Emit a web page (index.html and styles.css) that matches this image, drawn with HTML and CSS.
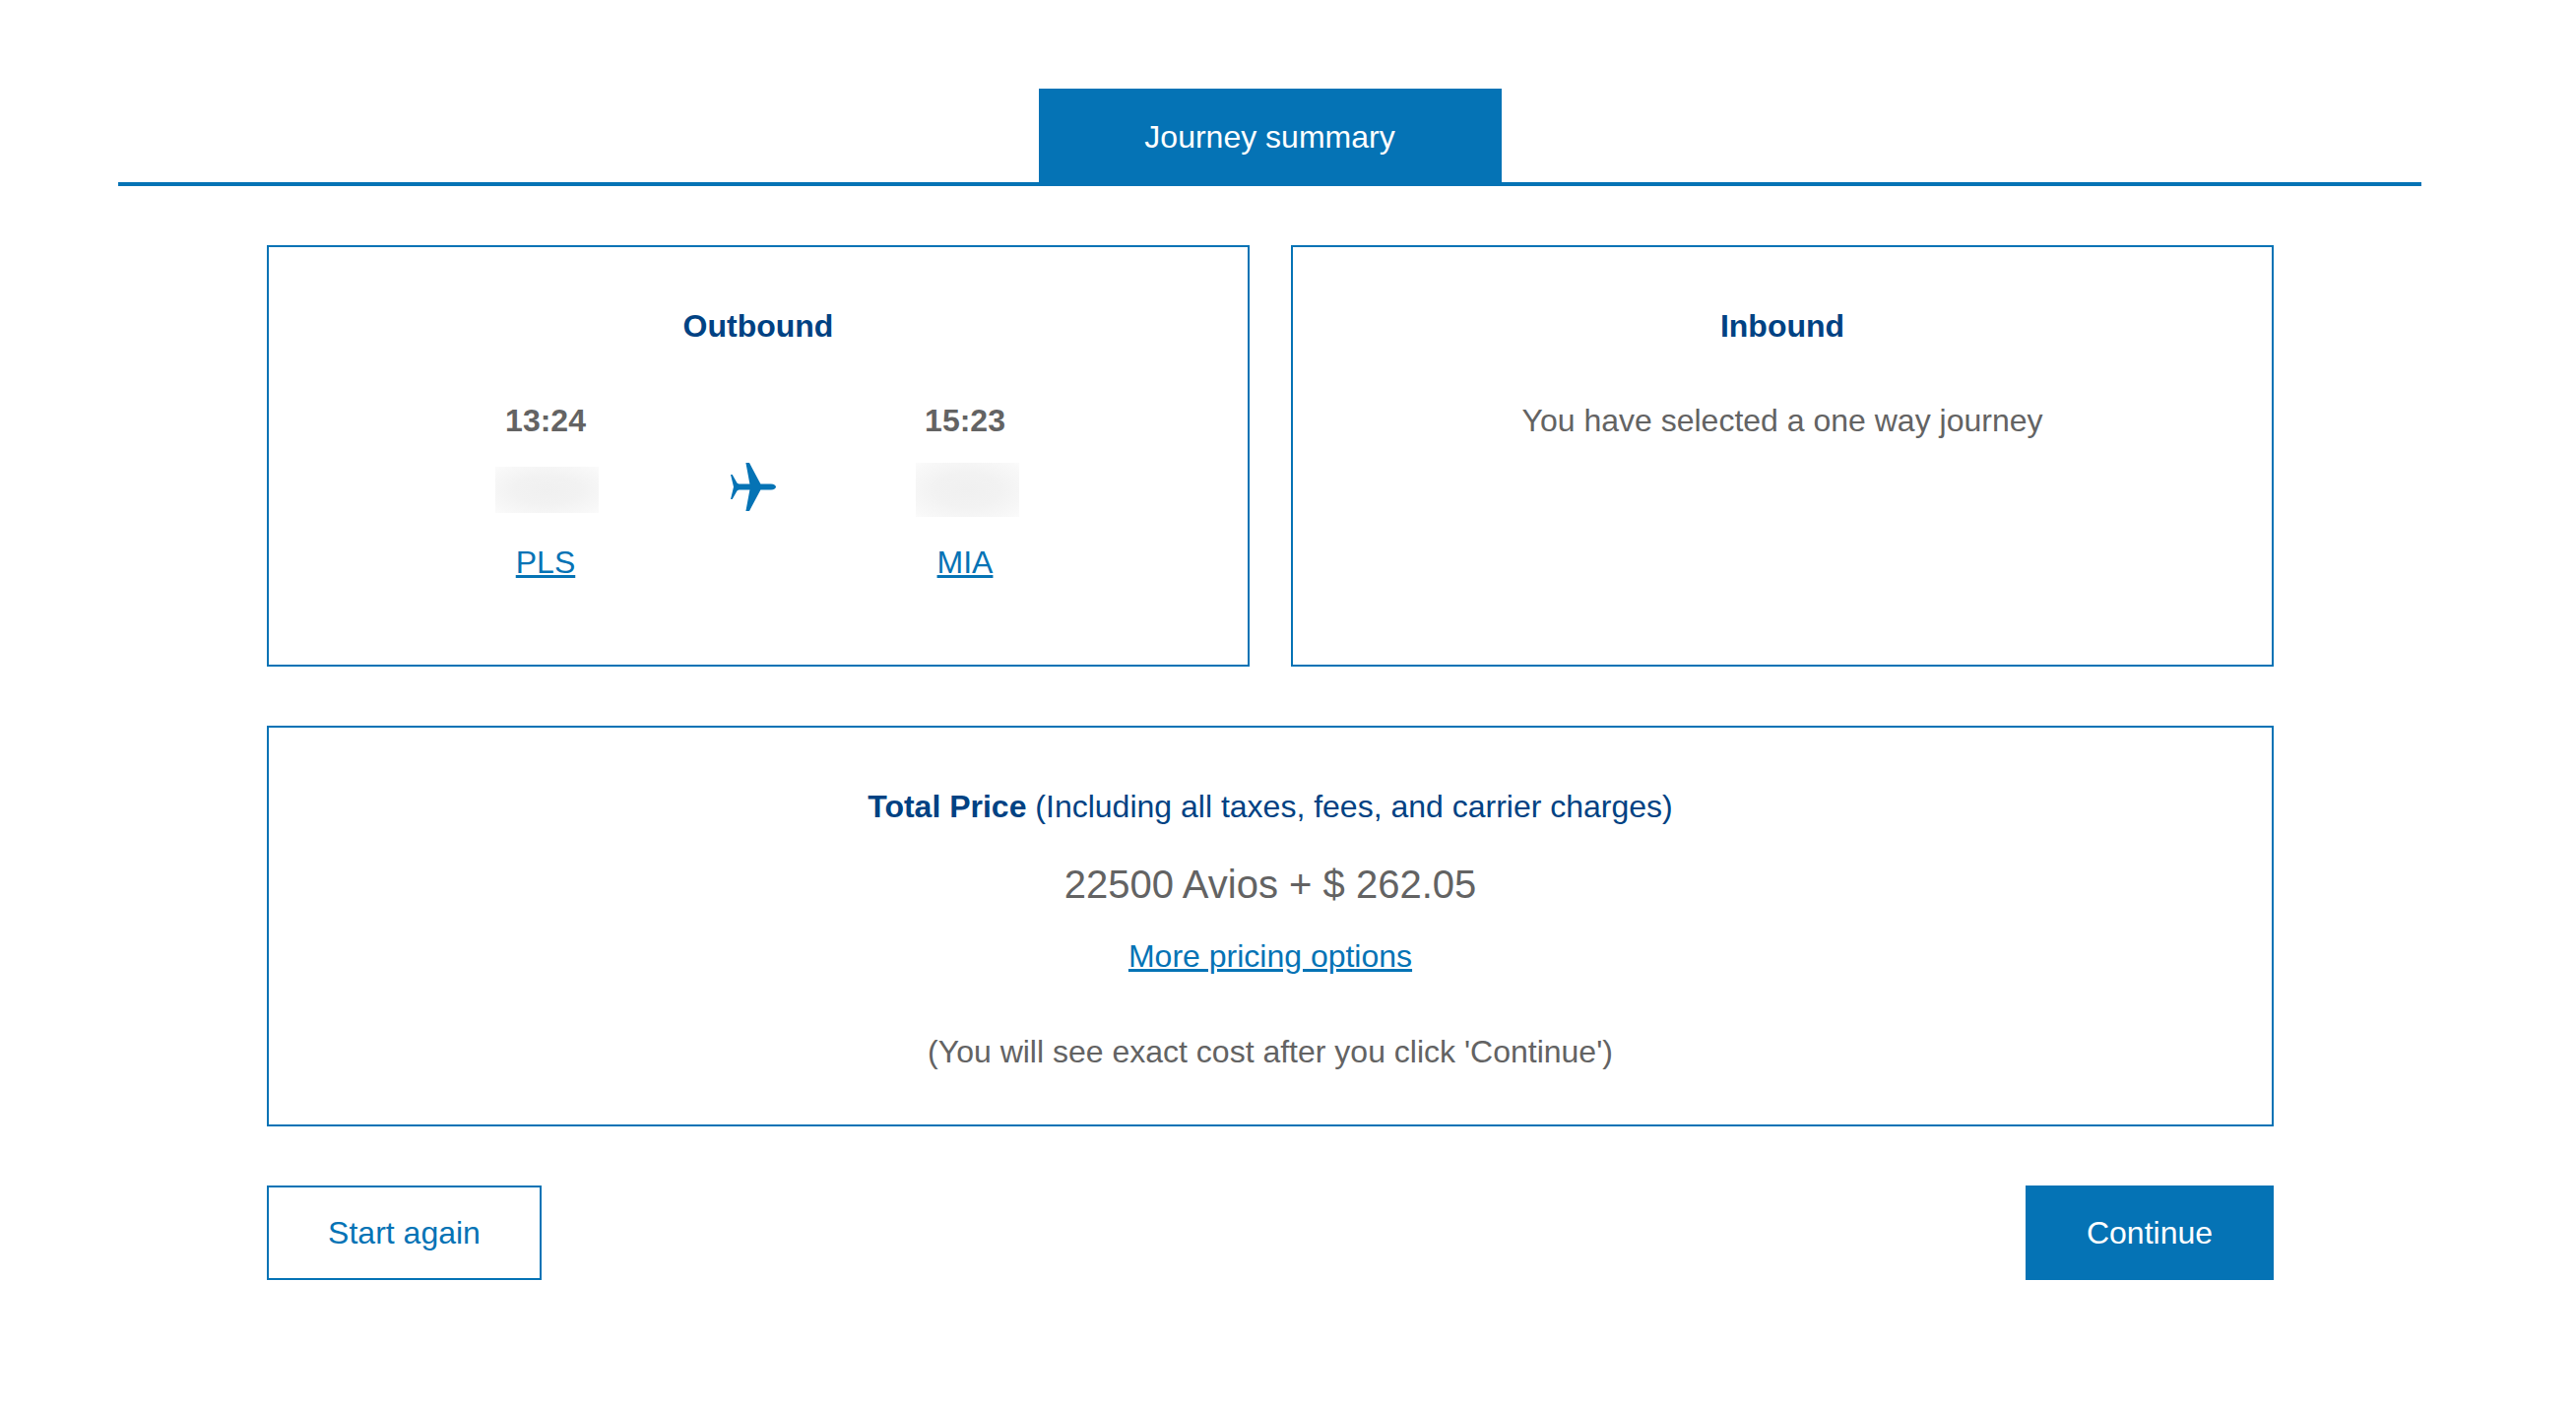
FILE: index.html
```html
<!DOCTYPE html>
<html lang="en">
<head>
<meta charset="utf-8">
<title>Journey summary</title>
<link rel="stylesheet" href="styles.css">
</head>
<body>
<main class="page">
  <header class="tabs"><h1 class="tab">Journey summary</h1></header>
  <div class="content">
    <section class="journeys">
      <article class="box journey">
        <h2 class="box-title">Outbound</h2>
        <div class="legs">
          <div class="leg">
            <strong class="time">13:24</strong>
            <div class="blur-slot"><div class="blur blur-a"></div></div>
            <a class="link" href="#">PLS</a>
          </div>
          <div class="plane">
            <svg width="46" height="49" viewBox="0 0 46 49"><path fill="#0573b5" d="M15.400 0H19L30.400 21.500H41C44 21.500 46 23 46 24.500S44 27.500 41 27.500H30.400L19 49H15.400L19.400 27.500H10C8 27.500 7 28 6.500 28.500L1.700 37H0L3 24.500 0 12H1.700L6.500 20.500C7 21 8 21.500 10 21.500H19.400Z"/></svg>
          </div>
          <div class="leg">
            <strong class="time">15:23</strong>
            <div class="blur-slot"><div class="blur blur-b"></div></div>
            <a class="link" href="#">MIA</a>
          </div>
        </div>
      </article>
      <article class="box journey">
        <h2 class="box-title">Inbound</h2>
        <p class="one-way">You have selected a one way journey</p>
      </article>
    </section>
    <section class="box price">
      <p class="price-title"><strong>Total Price</strong> (Including all taxes, fees, and carrier charges)</p>
      <p class="amount">22500 Avios + $ 262.05</p>
      <a class="link" href="#">More pricing options</a>
      <p class="note">(You will see exact cost after you click 'Continue')</p>
    </section>
    <div class="actions">
      <a class="btn btn-ghost" href="#">Start again</a>
      <a class="btn btn-solid" href="#">Continue</a>
    </div>
  </div>
</main>
</body>
</html>
```
FILE: styles.css
```css
* { box-sizing: border-box; }
html, body { margin: 0; background: #fff; }
body {
  font-family: "Liberation Sans", Arial, sans-serif;
  font-size: 32px;
  line-height: 40px;
  color: #636363;
}
.page { padding: 90px 157px 0 120px; height: 1432px; }
.tabs {
  display: flex;
  justify-content: center;
  border-bottom: 4px solid #0573b5;
  height: 99px;
}
.tab {
  margin: 0;
  width: 470px;
  height: 99px;
  background: #0573b5;
  color: #fff;
  font-size: 32px;
  font-weight: 400;
  line-height: 98px;
  text-align: center;
}
.content { padding: 60px 150px 0 151px; }
.journeys {
  display: grid;
  grid-template-columns: 998px 998px;
  justify-content: space-between;
}
.box { border: 2px solid #0573b5; text-align: center; }
.journey { height: 428px; padding-top: 60px; }
.box-title {
  margin: 0;
  font-size: 32px;
  line-height: 40px;
  font-weight: 700;
  color: #004283;
}
.legs {
  display: grid;
  grid-template-columns: 213px 213px 213px;
  justify-content: center;
  margin-top: 56px;
  padding-right: 6px;
}
.leg { display: flex; flex-direction: column; align-items: center; }
.time { font-weight: 700; color: #636363; }
.blur-slot {
  display: flex;
  align-items: center;
  justify-content: center;
  height: 56px;
  margin: 22px 0 26px;
  padding-left: 5px;
}
.blur { width: 105px; background: radial-gradient(ellipse at center, #f0f0f0 0%, #f2f2f2 45%, #f8f8f8 85%, #fbfbfb 100%); }
.blur-a { height: 47px; margin-right: 3px; }
.blur-b { height: 55px; }
.plane { padding: 63px 5px 0 0; display: flex; justify-content: center; }
.plane svg { display: block; }
.link { color: #0573b5; text-decoration: underline; }
.one-way { margin: 56px 0 0; }
.price { margin-top: 60px; height: 407px; padding-top: 60px; }
.price-title { margin: 0; color: #004283; }
.amount { margin: 39px 0 0; font-size: 40px; line-height: 40px; }
.price .link { display: inline-block; margin-top: 33px; }
.note { margin: 57px 0 0; }
.actions { display: flex; justify-content: space-between; margin-top: 60px; }
.btn {
  display: flex;
  align-items: center;
  justify-content: center;
  height: 96px;
  text-decoration: none;
}
.btn-ghost { width: 279px; border: 2px solid #0573b5; color: #0573b5; }
.btn-solid { width: 252px; background: #0573b5; color: #fff; }
```
